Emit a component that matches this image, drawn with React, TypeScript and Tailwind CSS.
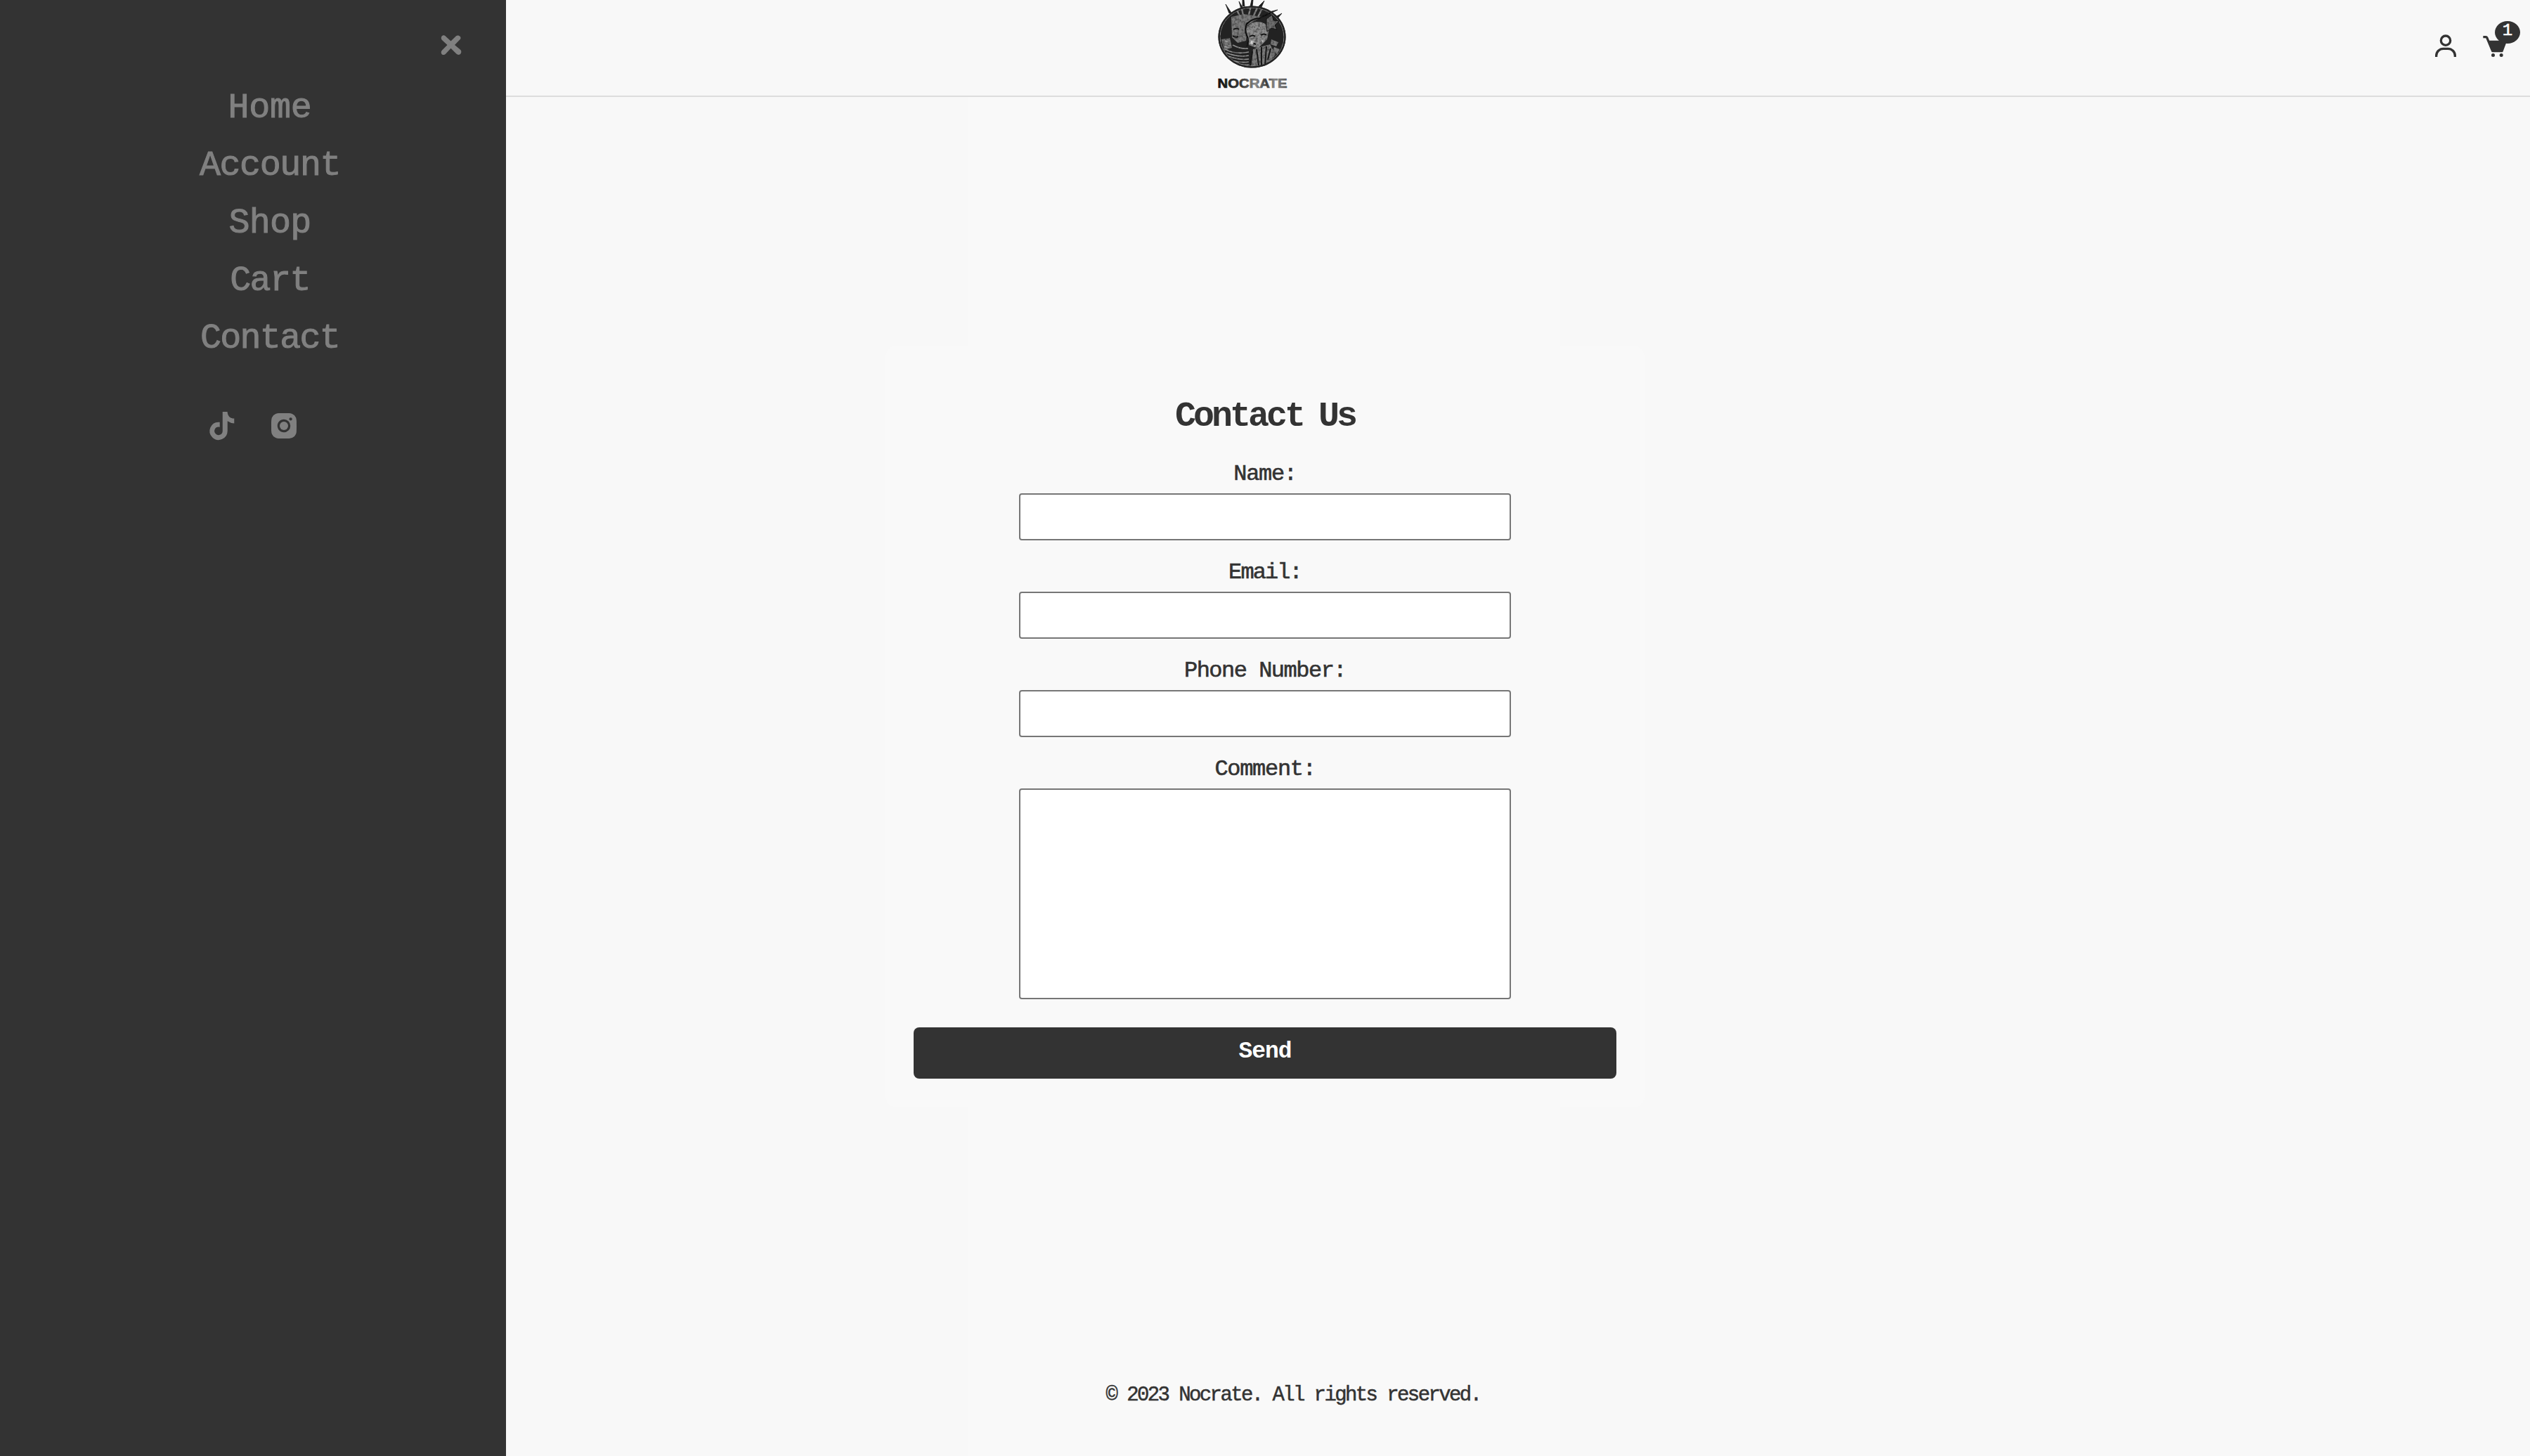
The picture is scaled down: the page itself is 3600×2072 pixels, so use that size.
import React from 'react';
import { BiLogoInstagramAlt, BiLogoTiktok, BiSolidCart, BiUser } from 'react-icons/bi';

const links = [
  { label: 'Home', spacing: 'tracking-[-0.2px]' },
  { label: 'Account', spacing: 'tracking-[-1.4px]' },
  { label: 'Shop', spacing: 'tracking-[-0.8px]' },
  { label: 'Cart', spacing: 'tracking-[-1.6px]' },
  { label: 'Contact', spacing: 'tracking-[-1.7px]' },
];

const fields = [
  { label: 'Name:', spacing: 'tracking-[-1.3px]' },
  { label: 'Email:', spacing: 'tracking-[-1.9px]' },
  { label: 'Phone Number:', spacing: 'tracking-[-1.5px]' },
];

function Logo() {
  return (
    <svg width="104" height="130" viewBox="0 0 104 130" fill="none">
      <defs>
        <clipPath id="coin">
          <ellipse cx="51.5" cy="52.5" rx="46" ry="42" />
        </clipPath>
        <linearGradient id="ink" x1="0" x2="1" y1="0" y2="0">
          <stop offset="0" stopColor="#111" />
          <stop offset="0.35" stopColor="#3a3a3a" />
          <stop offset="0.55" stopColor="#8a8a8a" />
          <stop offset="0.7" stopColor="#3c3c3c" />
          <stop offset="0.82" stopColor="#888" />
          <stop offset="1" stopColor="#555" />
        </linearGradient>
        <filter id="speckle" x="0" y="0" width="1" height="1">
          <feTurbulence type="fractalNoise" baseFrequency="0.3" numOctaves="3" seed="4" />
          <feColorMatrix values="0 0 0 0 0.02  0 0 0 0 0.02  0 0 0 0 0.02  3 0 0 0 -1.2" />
        </filter>
        <filter id="soften" x="-5%" y="-5%" width="110%" height="110%">
          <feGaussianBlur stdDeviation="0.6" />
        </filter>
      </defs>
      <path d="M14 6l8 12-3 1zM33 2l6 10-3 1zM38 0h2l1 9h-3zM51 0h2l-1 9h-3zM69 1l-4 9-4-1zM88 14l-10 5-2-2zM94 19l-6 7-3-2z" fill="#1c1c1c" stroke="#1c1c1c" strokeWidth="0.8" />
      <ellipse cx="51.5" cy="52.5" rx="48" ry="44" fill="#282828" />
      <g clipPath="url(#coin)" filter="url(#soften)">
        <ellipse cx="51.5" cy="52.5" rx="45.500" ry="41.500" fill="#222" stroke="#8a8a8a" strokeWidth="1" />
        <path d="M27 8l8 17M36 8l3 14M50 8l-3 13M60 9l-6 13M66 12l-6 12" stroke="#858585" strokeWidth="2.4" />
        <path d="M22 24l18-4 26 4-12 6-9 6-2 22-12 3-8-8z" fill="#7c7c7c" />
        <path d="M44 40q4-9 15-9t17 9l-3 16-13 13-13-5-4-13z" fill="#8e8e8e" />
        <path d="M45 32q-5 9-1 18t0 16M43 35q9-9 19-9l18-9" stroke="#0e0e0e" strokeWidth="2.2" />
        <path d="M72 27l8-6 2 8 8 1-6 6 3 6-8-2-6 5-1-9z" fill="#707070" stroke="#111" />
        <path d="M25 42q5-3 8 0M24 51q4 3 8 1M48 52q5-3 8 0M64 50q5-3 8 0M49 60l8 3" stroke="#101010" strokeWidth="2" />
        <path d="M50 58l5 1-2 4-5-1zM65 57l3 1-2 2z" fill="#d0d0d0" />
        <path d="M8 56l12-2 3 14-11 4z" fill="#777" />
        <path d="M13 58l5 2-2 4 5 1M12 66l7 2" stroke="#ccc" strokeWidth="0.8" />
        <path d="M13 70q15 8 34 4M15 75q16 7 32 4M18 80q16 6 29 4M23 86q13 4 24 2M30 92h18M24 64q11 6 22 5" stroke="#949494" strokeWidth="1.6" />
        <path d="M53 70l24-7 8 14-12 18H50z" fill="#7c7c7c" />
        <path d="M58 70l3 23M65 67v26M72 66l-2 28M78 69l-4 16M52 73l-3 20" stroke="#141414" strokeWidth="2" />
        <path d="M79 56l10 4-3 6-8-3zM83 67l8 3-4 7-6-4z" fill="#7c7c7c" />
        <rect x="3" y="8" width="97" height="90" filter="url(#speckle)" opacity="0.5" />
      </g>
      <ellipse cx="51.5" cy="52.5" rx="47" ry="43" stroke="#242424" strokeWidth="2" />
      <text x="2.5" y="124.5" textLength="99" lengthAdjust="spacingAndGlyphs" fill="url(#ink)" stroke="url(#ink)" strokeWidth="0.7" className="font-['Liberation_Sans',sans-serif] text-[19px] font-bold">
        NOCRATE
      </text>
    </svg>
  );
}

function Sidebar() {
  return (
    <aside className="flex h-full w-[720px] shrink-0 flex-col bg-[#333333] text-[#808080]">
      <div className="flex h-28 justify-end pt-[49px] pr-[63px]">
        <svg width="30" height="30" viewBox="0 0 30 30" fill="currentColor">
          <path d="M4.500 1.200C6 1.200 7 2.500 8 3.500L14.500 9.500L22 2.300C24 0.300 29 2 28.500 5.500C28.200 7 27 7.800 26 8.800L20 15L27.500 21.300C29.500 23 30 25 28.600 27.300C27 29.600 24 29.200 22.300 27.500L14.500 19.800L8 26.700C6 29.500 2.500 29.800 1.200 27.500C0.200 25.500 0.800 23.600 2.500 22L9.500 15L2.500 8.500C0.500 7 0.500 4.500 1.300 3C2 1.800 3 1.200 4.500 1.200Z" />
        </svg>
      </div>
      <nav className="flex w-[768px] flex-col items-center pt-px text-[50px] leading-[82px] [-webkit-text-stroke:1px_#808080]">
        {links.map((l) => (
          <a key={l.label} className={l.spacing}>{l.label}</a>
        ))}
      </nav>
      <div className="flex gap-10 pt-[59px] pl-[292px]">
        <BiLogoTiktok size={48} />
        <BiLogoInstagramAlt size={48} />
      </div>
    </aside>
  );
}

function Header() {
  return (
    <header className="flex h-[138px] shrink-0 items-start justify-between border-b-2 border-[#dddddd] bg-[#f8f8f8] pl-[1010px]">
      <Logo />
      <div className="flex gap-[30px] pt-[46px] pr-[30px] text-[#333333]">
        <BiUser size={40} />
        <div className="relative">
          <BiSolidCart size={40} />
          <span className="absolute -top-4 left-5 flex h-8 w-9 justify-center rounded-[50%] bg-[#333333] text-[24px] leading-[28px] text-white [-webkit-text-stroke:0.6px_#ffffff]">
            1
          </span>
        </div>
      </div>
    </header>
  );
}

function ContactForm() {
  return (
    <form className="mt-[354px] ml-[540px] flex h-[1084px] w-[1080px] flex-col items-center rounded-2xl bg-[#f9f9f9] px-10 pt-[71px] pb-10">
      <h2 className="mb-8 text-[50px] leading-[60px] font-bold tracking-[-4px] [word-spacing:-4px]">Contact Us</h2>
      {fields.map((f) => (
        <label key={f.label} className="mb-[26px] flex flex-col items-center gap-[7px] text-[32px] leading-10">
          <span className={`${f.spacing} [-webkit-text-stroke:0.6px_#333333]`}>{f.label}</span>
          <input className="block h-[67px] w-[700px] rounded-[4px] border-2 border-[#767676] bg-white" />
        </label>
      ))}
      <label className="mb-10 flex flex-col items-center gap-[7px] text-[32px] leading-10">
        <span className="tracking-[-1.3px] [-webkit-text-stroke:0.6px_#333333]">Comment:</span>
        <textarea className="block h-[300px] w-[700px] resize-none rounded-[4px] border-2 border-[#767676] bg-white" />
      </label>
      <button type="button" className="h-[73px] w-full shrink-0 rounded-lg bg-[#333333] pb-1 text-[33px] leading-10 font-bold tracking-[-1px] text-white">
        Send
      </button>
    </form>
  );
}

export default function App() {
  return (
    <div className="flex h-[2072px] w-full overflow-hidden bg-[#f8f8f8] font-['Liberation_Mono','Courier_New',monospace] text-[#333333]">
      <Sidebar />
      <main className="flex flex-1 flex-col bg-[linear-gradient(to_right,#f8f8f8_658px,#f9f9f9_658px,#f9f9f9_1500px,#f8f8f8_1500px)]">
        <Header />
        <ContactForm />
        <footer className="mt-[390px] w-[2240px] text-center text-[29px] leading-10 tracking-[-2.6px] [-webkit-text-stroke:0.5px_#333333]">
          © 2023 Nocrate. All rights reserved.
        </footer>
      </main>
    </div>
  );
}
